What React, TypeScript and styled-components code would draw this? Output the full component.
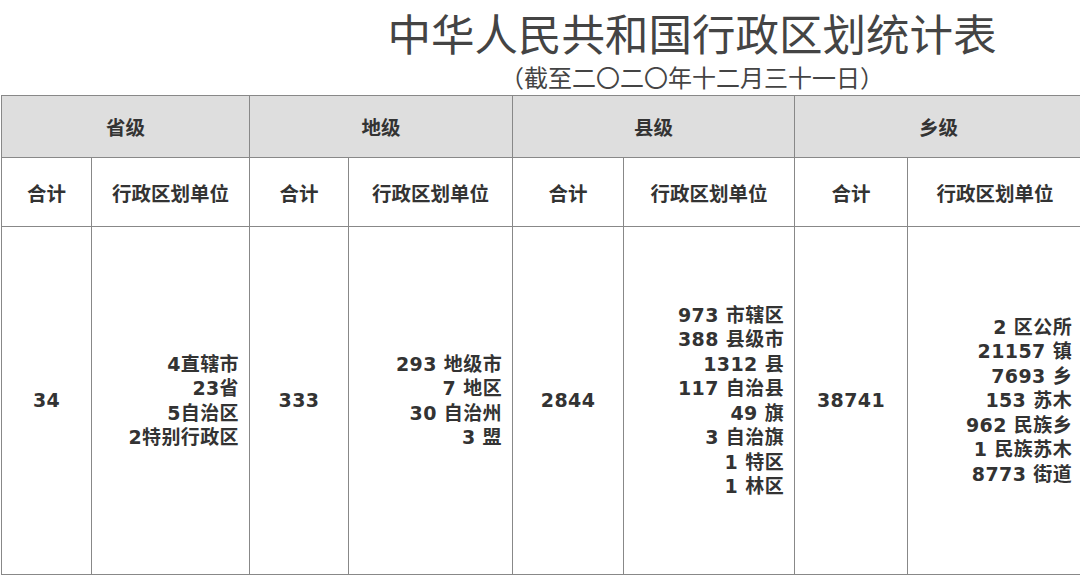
import React from "react";
import styled, { createGlobalStyle } from "styled-components";

const Global = createGlobalStyle`
  html, body { margin: 0; padding: 0; background: #fff; overflow: hidden; }
  body { font-family: "DejaVu Sans", "Noto Sans CJK SC", sans-serif; color: #333; }
`;

const Page = styled.div`
  width: 1080px;
  height: 577px;
  overflow: hidden;
`;

const TitleBlock = styled.div`
  height: 95px;
  display: flex;
  flex-direction: column;
  align-items: center;
  padding-left: 304px;
  box-sizing: border-box;
`;

const Title = styled.div`
  font-family: "Noto Sans CJK SC", sans-serif;
  font-size: 43.5px;
  font-weight: 400;
  color: #444;
  line-height: 46px;
  margin-top: 10px;
`;

const Sub = styled.div`
  font-family: "Noto Sans CJK SC", sans-serif;
  font-size: 24px;
  color: #444;
  line-height: 28px;
  margin-top: 7px;
`;

const Table = styled.table`
  border-collapse: collapse;
  table-layout: fixed;
  width: 1081px;
  margin-left: 1px;
  font-weight: bold;
  font-size: 19px;
`;

const Th = styled.th<{ $gray?: boolean; $h: number }>`
  border: 1px solid #888;
  background: ${p => (p.$gray ? "#dedede" : "#fff")};
  height: ${p => p.$h}px;
  padding: 0;
  font-family: "Noto Sans CJK SC", sans-serif;
  font-size: 19.5px;
  font-weight: bold;
  color: #333;
  text-align: center;
`;

const Td = styled.td<{ $right?: boolean }>`
  border: 1px solid #888;
  height: 347px;
  padding: ${p => (p.$right ? "0 10px 0 0" : "0")};
  text-align: ${p => (p.$right ? "right" : "center")};
  vertical-align: middle;
  line-height: 24.5px;
  letter-spacing: 0.4px;
  color: #333;
`;

const widths = [90, 158, 99, 164, 111, 171, 113, 175];

const groups = ["省级", "地级", "县级", "乡级"];
const data: [string, string[]][] = [
  ["34", ["4直辖市", "23省", "5自治区", "2特别行政区"]],
  ["333", ["293 地级市", "7 地区", "30 自治州", "3 盟"]],
  ["2844", ["973 市辖区", "388 县级市", "1312 县", "117 自治县", "49 旗", "3 自治旗", "1 特区", "1 林区"]],
  ["38741", ["2 区公所", "21157 镇", "7693 乡", "153 苏木", "962 民族乡", "1 民族苏木", "8773 街道"]],
];

export default function App() {
  return (
    <Page>
      <Global />
      <TitleBlock>
        <Title>中华人民共和国行政区划统计表</Title>
        <Sub>（截至二〇二〇年十二月三十一日）</Sub>
      </TitleBlock>
      <Table>
        <colgroup>
          {widths.map((w, i) => (
            <col key={i} style={{ width: w }} />
          ))}
        </colgroup>
        <thead>
          <tr>
            {groups.map(g => (
              <Th key={g} colSpan={2} $gray $h={61}>{g}</Th>
            ))}
          </tr>
          <tr>
            {groups.map(g => (
              <React.Fragment key={g}>
                <Th $h={68}>合计</Th>
                <Th $h={68}>行政区划单位</Th>
              </React.Fragment>
            ))}
          </tr>
        </thead>
        <tbody>
          <tr>
            {data.map(([t, lines]) => (
              <React.Fragment key={t}>
                <Td>{t}</Td>
                <Td $right>
                  {lines.map(l => (
                    <div key={l}>{l}</div>
                  ))}
                </Td>
              </React.Fragment>
            ))}
          </tr>
        </tbody>
      </Table>
    </Page>
  );
}
